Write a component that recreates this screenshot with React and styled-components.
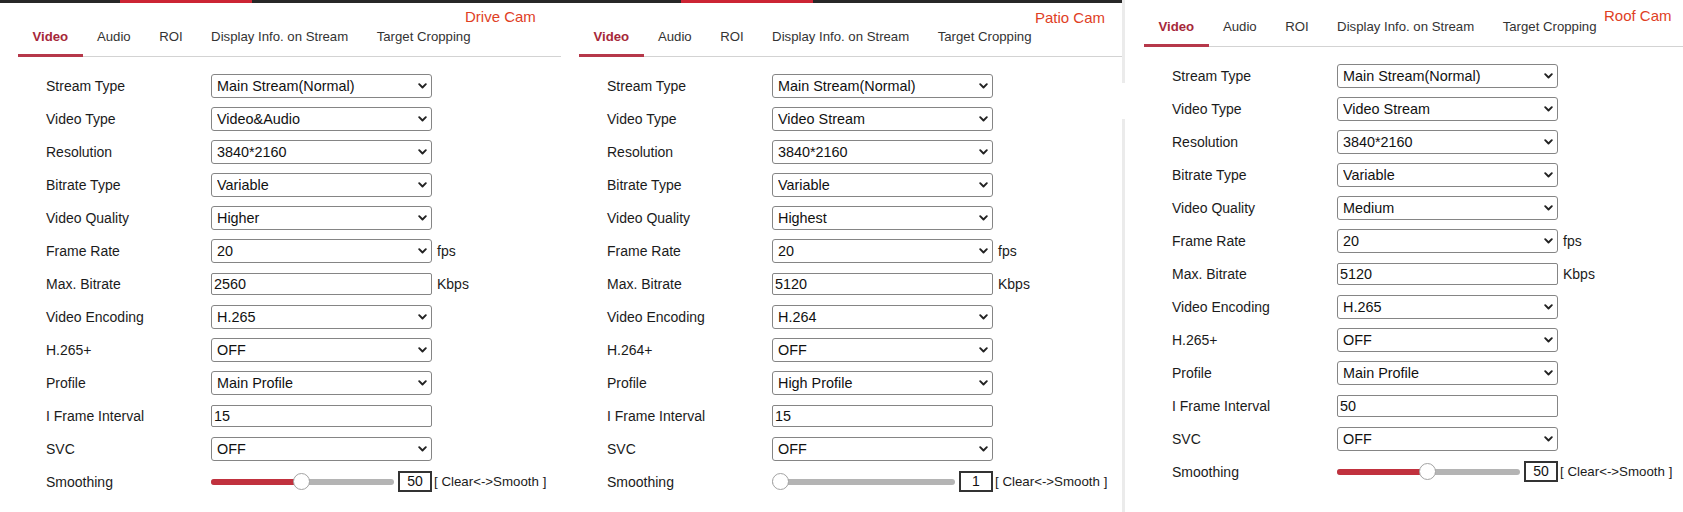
import React from "react";
import styled, { createGlobalStyle } from "styled-components";

const GlobalStyle = createGlobalStyle`
  html, body {
    margin: 0;
    padding: 0;
    background: #fff;
  }
  body {
    font-family: "Liberation Sans", Arial, sans-serif;
    color: #1b1b1b;
  }
`;

const Page = styled.div`
  display: flex;
  width: 1683px;
  height: 512px;
  overflow: hidden;
  background: #fff;
`;

const Panel = styled.section`
  position: relative;
  flex: 0 0 ${(p) => p.$width}px;
  display: flex;
  flex-direction: column;
  padding-left: ${(p) => p.$inset || 0}px;
  box-sizing: border-box;
`;

const Divider = styled.div`
  flex: 0 0 3px;
  background: linear-gradient(
    #ebebeb 0 83px,
    transparent 83px 119px,
    #ebebeb 119px
  );
`;

const TopBar = styled.div`
  height: 3px;
  padding-left: 120px;
  background: #272727;
`;

const TopBarMark = styled.div`
  width: 132px;
  height: 100%;
  background: #cc2434;
`;

const CamName = styled.div`
  position: absolute;
  left: ${(p) => p.$x}px;
  top: ${(p) => p.$y}px;
  font-size: 15px;
  line-height: 16px;
  color: #e0401f;
`;

const TabList = styled.nav`
  display: flex;
  margin-left: 18px;
  padding-top: ${(p) => p.$top}px;
  border-bottom: 1px solid #d3d3d3;
`;

const Tab = styled.div`
  position: relative;
  padding: 0 14.25px 11px;
  font-size: 13.2px;
  line-height: 16px;
  white-space: nowrap;
  color: ${(p) => (p.$active ? "#a6283a" : "#333")};
  font-weight: ${(p) => (p.$active ? 700 : 400)};

  &:first-child {
    padding: 0 14.5px 11px;
  }

  &::after {
    content: "";
    display: ${(p) => (p.$active ? "block" : "none")};
    position: absolute;
    left: 0;
    right: 0;
    bottom: -1px;
    height: 3px;
    background: #b6384a;
  }
`;

const Form = styled.div`
  padding: 12px 0 0 46px;
`;

const Row = styled.div`
  display: grid;
  grid-template-columns: 165px auto auto;
  justify-content: start;
  align-items: center;
  height: 33px;
`;

const Label = styled.span`
  font-size: 14px;
  color: #1b1b1b;
  white-space: nowrap;
`;

const SelectWrap = styled.div`
  position: relative;
  width: 221px;
  height: 24px;
`;

const Select = styled.select`
  appearance: none;
  width: 100%;
  height: 100%;
  box-sizing: border-box;
  margin: 0;
  padding: 0 20px 0 5px;
  border: 1px solid #858585;
  border-radius: 3px;
  background: #fff;
  font-family: inherit;
  font-size: 14.4px;
  color: #111;
  outline: none;
`;

const Chevron = styled.svg`
  position: absolute;
  right: 5px;
  top: 50%;
  width: 9px;
  height: 6px;
  margin-top: -3px;
  pointer-events: none;
`;

const TextInput = styled.input`
  width: 221px;
  height: 22px;
  box-sizing: border-box;
  margin: 0;
  padding: 0 2px;
  border: 1px solid #858585;
  border-radius: 2px;
  font-family: inherit;
  font-size: 14.4px;
  color: #111;
  outline: none;
`;

const Unit = styled.span`
  margin-left: 5px;
  font-size: 14px;
  color: #1b1b1b;
`;

const SliderGroup = styled.div`
  display: flex;
  align-items: center;
`;

const Track = styled.div`
  position: relative;
  width: 183px;
  height: 6px;
  border-radius: 3px;
  background: #b4b4b4;
`;

const Fill = styled.div`
  height: 100%;
  border-radius: 3px;
  background: #c1313e;
`;

const Thumb = styled.div`
  position: absolute;
  top: 50%;
  width: 17px;
  height: 17px;
  margin: -8.5px 0 0 -8.5px;
  box-sizing: border-box;
  border-radius: 50%;
  border: 1px solid #a3a3a3;
  background: #fff;
`;

const ValueBox = styled.div`
  width: 34px;
  height: 21px;
  margin-left: 4px;
  box-sizing: border-box;
  border: 2px solid #333;
  font-size: 14px;
  line-height: 17px;
  text-align: center;
  color: #111;
`;

const Hint = styled.span`
  margin-left: 2px;
  font-size: 13.3px;
  color: #1b1b1b;
  white-space: nowrap;
`;

const TABS = ["Video", "Audio", "ROI", "Display Info. on Stream", "Target Cropping"];

const panels = [
  {
    cam: "Drive Cam",
    camX: 465,
    camY: 9,
    width: 561,
    bar: true,
    tabTop: 26,
    codec: "H.265",
    fields: {
      videoType: "Video&Audio",
      quality: "Higher",
      bitrate: "2560",
      profile: "Main Profile",
      iframe: "15",
    },
    smoothing: 50,
  },
  {
    cam: "Patio Cam",
    camX: 474,
    camY: 10,
    width: 561,
    bar: true,
    tabTop: 26,
    codec: "H.264",
    fields: {
      videoType: "Video Stream",
      quality: "Highest",
      bitrate: "5120",
      profile: "High Profile",
      iframe: "15",
    },
    smoothing: 1,
  },
  {
    cam: "Roof Cam",
    camX: 479,
    camY: 8,
    width: 558,
    inset: 1,
    bar: false,
    tabTop: 19,
    codec: "H.265",
    fields: {
      videoType: "Video Stream",
      quality: "Medium",
      bitrate: "5120",
      profile: "Main Profile",
      iframe: "50",
    },
    smoothing: 50,
  },
];

function Dropdown({ value }) {
  return (
    <SelectWrap>
      <Select value={value} onChange={() => {}}>
        <option>{value}</option>
      </Select>
      <Chevron viewBox="0 0 9 6">
        <path
          d="M1.2 1.2 L4.5 4.5 L7.8 1.2"
          fill="none"
          stroke="#222"
          strokeWidth="1.9"
          strokeLinecap="round"
          strokeLinejoin="round"
        />
      </Chevron>
    </SelectWrap>
  );
}

function Smoothing({ value }) {
  // thumb centre runs from 8px to 175px along the 183px track
  const pos = 8 + ((value - 1) / 99) * 167;
  return (
    <SliderGroup>
      <Track>
        <Fill style={{ width: value > 1 ? pos : 0 }} />
        <Thumb style={{ left: pos }} />
      </Track>
      <ValueBox>{value}</ValueBox>
      <Hint>[ Clear&lt;-&gt;Smooth ]</Hint>
    </SliderGroup>
  );
}

function CamPanel({ panel }) {
  const f = panel.fields;
  const rows = [
    ["Stream Type", <Dropdown value="Main Stream(Normal)" />],
    ["Video Type", <Dropdown value={f.videoType} />],
    ["Resolution", <Dropdown value="3840*2160" />],
    ["Bitrate Type", <Dropdown value="Variable" />],
    ["Video Quality", <Dropdown value={f.quality} />],
    ["Frame Rate", <Dropdown value="20" />, "fps"],
    ["Max. Bitrate", <TextInput defaultValue={f.bitrate} />, "Kbps"],
    ["Video Encoding", <Dropdown value={panel.codec} />],
    [panel.codec + "+", <Dropdown value="OFF" />],
    ["Profile", <Dropdown value={f.profile} />],
    ["I Frame Interval", <TextInput defaultValue={f.iframe} />],
    ["SVC", <Dropdown value="OFF" />],
    ["Smoothing", <Smoothing value={panel.smoothing} />],
  ];

  return (
    <Panel $width={panel.width} $inset={panel.inset}>
      {panel.bar && (
        <TopBar>
          <TopBarMark />
        </TopBar>
      )}
      <TabList $top={panel.tabTop}>
        {TABS.map((t, i) => (
          <Tab key={t} $active={i === 0}>
            {t}
          </Tab>
        ))}
      </TabList>
      <Form>
        {rows.map(([label, control, unit]) => (
          <Row key={label}>
            <Label>{label}</Label>
            {control}
            {unit ? <Unit>{unit}</Unit> : <span />}
          </Row>
        ))}
      </Form>
      <CamName $x={panel.camX} $y={panel.camY}>
        {panel.cam}
      </CamName>
    </Panel>
  );
}

export default function App() {
  return (
    <>
      <GlobalStyle />
      <Page>
        <CamPanel panel={panels[0]} />
        <CamPanel panel={panels[1]} />
        <Divider />
        <CamPanel panel={panels[2]} />
      </Page>
    </>
  );
}
